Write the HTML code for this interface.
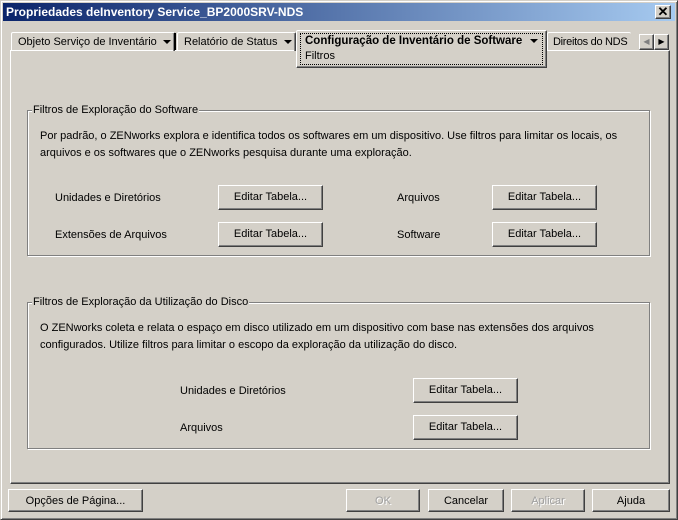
<!DOCTYPE html>
<html><head><meta charset="utf-8"><style>
*{margin:0;padding:0;box-sizing:border-box}
body{width:678px;height:520px;overflow:hidden;background:#d4d0c8;font-family:"Liberation Sans",Arial,sans-serif;font-size:11px;color:#000;position:relative}
.a{position:absolute;white-space:nowrap}
.win{position:absolute;left:0;top:0;width:678px;height:520px;border:1px solid;border-color:#d4d0c8 #404040 #404040 #d4d0c8;box-shadow:inset 1px 1px 0 #fff,inset -1px -1px 0 #808080}
.title{position:absolute;left:3px;top:3px;width:672px;height:18px;background:linear-gradient(90deg,#0a246a,#a6caf0);color:#fff;font-weight:bold;font-size:12px;line-height:18px;padding-left:3px}
.btn{position:absolute;background:#d4d0c8;border:1px solid;border-color:#fff #404040 #404040 #fff;box-shadow:inset -1px -1px 0 #808080;text-align:center;line-height:22px}
.dis{color:#a0a0a0;text-shadow:1px 1px 0 #fff}
.grp{position:absolute;border:1px solid #808080;box-shadow:1px 1px 0 #fff,inset 1px 1px 0 #fff}
.gt{position:absolute;background:#d4d0c8;padding:0 1px;line-height:13px}
.tab{position:absolute;border:1px solid;border-color:#fff #404040 transparent #fff;border-bottom:none;box-shadow:inset -1px 0 0 #808080;line-height:19px;padding-left:6px;border-radius:2px 2px 0 0}
.arr{display:inline-block;width:0;height:0;border-left:4px solid transparent;border-right:4px solid transparent;border-top:4px solid #000;vertical-align:middle;margin-left:6px}
</style></head><body>
<div class="win"></div>
<div class="title">Propriedades deInventory Service_BP2000SRV-NDS</div>
<div class="btn" style="left:655px;top:5px;width:16px;height:14px;line-height:11px;font-size:13px;font-weight:bold">✕</div>

<div class="a" style="left:10px;top:50px;width:660px;height:434px;border:1px solid;border-color:#fff #404040 #404040 #fff;box-shadow:inset -1px -1px 0 #808080"></div>

<div class="tab" style="left:11px;top:32px;width:164px;height:19px">Objeto Serviço de Inventário<span class="arr"></span></div>
<div class="a" style="left:174px;top:33px;width:2px;height:17px;background:#000"></div>
<div class="tab" style="left:177px;top:32px;width:119px;height:19px">Relatório de Status<span class="arr"></span></div>
<div class="tab" style="left:296px;top:30px;width:251px;height:38px;border-bottom:1px solid #404040;box-shadow:inset -1px -1px 0 #808080;padding:2px 0 0 3px;line-height:15px;background:#d4d0c8">
<div style="border:1px dotted #000;height:32px;width:243px;padding-left:4px"><b style="font-size:11.5px">Configuração de Inventário de Software</b><span class="arr" style="margin-left:8px"></span><br>Filtros</div></div>
<div class="tab" style="left:547px;top:32px;width:84px;height:19px;overflow:hidden;padding-left:5px;box-shadow:none;border-right:none;letter-spacing:-0.3px">Direitos do NDS</div>
<div class="btn" style="left:639px;top:34px;width:15px;height:16px;line-height:14px;font-size:8px;color:#808080">◀</div>
<div class="btn" style="left:654px;top:34px;width:15px;height:16px;line-height:14px;font-size:8px">▶</div>

<div class="grp" style="left:27px;top:110px;width:623px;height:146px"></div>
<div class="gt" style="left:32px;top:104px">Filtros de Exploração do Software</div>
<div class="a" style="left:40px;top:128px;line-height:17px">Por padrão, o ZENworks explora e identifica todos os softwares em um dispositivo. Use filtros para limitar os locais, os<br>arquivos e os softwares que o ZENworks pesquisa durante uma exploração.</div>
<div class="a" style="left:55px;top:192px">Unidades e Diretórios</div>
<div class="a" style="left:55px;top:229px">Extensões de Arquivos</div>
<div class="a" style="left:397px;top:192px">Arquivos</div>
<div class="a" style="left:397px;top:229px">Software</div>
<div class="btn" style="left:218px;top:185px;width:105px;height:25px">Editar Tabela...</div>
<div class="btn" style="left:218px;top:222px;width:105px;height:25px">Editar Tabela...</div>
<div class="btn" style="left:492px;top:185px;width:105px;height:25px">Editar Tabela...</div>
<div class="btn" style="left:492px;top:222px;width:105px;height:25px">Editar Tabela...</div>

<div class="grp" style="left:27px;top:302px;width:623px;height:147px"></div>
<div class="gt" style="left:32px;top:296px">Filtros de Exploração da Utilização do Disco</div>
<div class="a" style="left:40px;top:320px;line-height:17px">O ZENworks coleta e relata o espaço em disco utilizado em um dispositivo com base nas extensões dos arquivos<br>configurados. Utilize filtros para limitar o escopo da exploração da utilização do disco.</div>
<div class="a" style="left:180px;top:385px">Unidades e Diretórios</div>
<div class="a" style="left:180px;top:422px">Arquivos</div>
<div class="btn" style="left:413px;top:378px;width:105px;height:25px">Editar Tabela...</div>
<div class="btn" style="left:413px;top:415px;width:105px;height:25px">Editar Tabela...</div>

<div class="btn" style="left:8px;top:489px;width:135px;height:23px">Opções de Página...</div>
<div class="btn dis" style="left:346px;top:489px;width:74px;height:23px">OK</div>
<div class="btn" style="left:428px;top:489px;width:76px;height:23px">Cancelar</div>
<div class="btn dis" style="left:511px;top:489px;width:74px;height:23px">Aplicar</div>
<div class="btn" style="left:592px;top:489px;width:78px;height:23px">Ajuda</div>
</body></html>
